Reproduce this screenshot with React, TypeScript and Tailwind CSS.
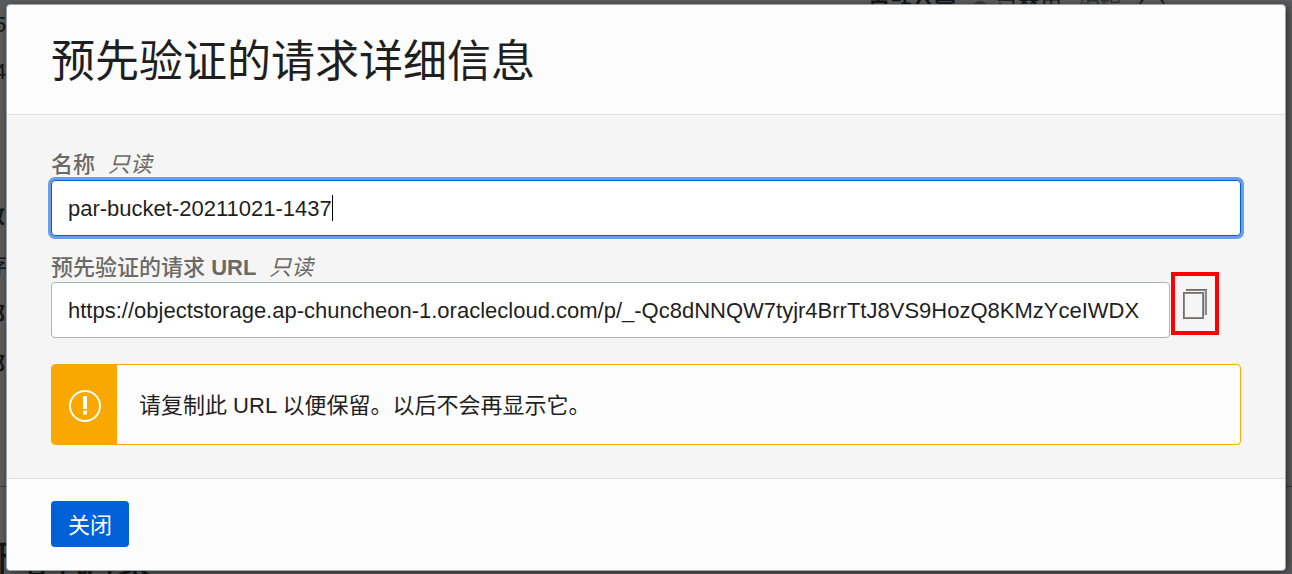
function CopyIcon() {
  return (
    <svg width="26" height="32" viewBox="0 0 26 32" fill="none" aria-hidden="true">
      <path d="M4 1H25V27H23V3H4Z" fill="#8b8a89" />
      <path d="M22 3H23V27H22Z" fill="#d0d0d0" />
      <path d="M4 1H25V2H4Z" fill="#6b6967" />
      <rect x="2" y="5" width="19" height="25" stroke="#8b8a89" strokeWidth="2" />
      <rect x="1.500" y="4.500" width="20" height="26" stroke="#716f6d" />
    </svg>
  );
}

function WarningIcon() {
  return (
    <svg width="34" height="34" viewBox="0 0 34 34" fill="none" aria-hidden="true">
      <circle cx="17" cy="17" r="15" stroke="#fff" strokeWidth="2" />
      <path d="M15 7h4v13h-4zM15 21.500h4v4h-4z" fill="#fff" />
    </svg>
  );
}

function PageBehind() {
  return (
    <div aria-hidden="true" className="absolute inset-0 overflow-hidden bg-[#5c5c5c] text-[22px] leading-[30px] text-[#161616]">
      <div className="absolute -top-[6px] left-[868px] flex items-center gap-4">
        <span className="font-bold">自动公寓</span>
        <span className="size-4 rounded-full bg-[#3c3c3c]" />
        <span className="-ml-2">已禁用</span>
        <span className="text-[#333333]">编辑</span>
        <span className="size-7 rounded-full border-2 border-[#222222]" />
      </div>
      <span className="absolute -left-[6px] top-[10px]">5</span>
      <span className="absolute -left-[6px] top-[57px]">4</span>
      <span className="absolute -left-[17px] top-[201px] font-bold">数</span>
      <span className="absolute -left-[15px] top-[251px]">存</span>
      <span className="absolute -left-[17px] top-[300px] font-bold">部</span>
      <span className="absolute -left-[17px] top-[350px] font-bold">部</span>
      <div className="absolute inset-x-0 top-[486px] border-t border-[#3a3a3a]" />
      <span className="absolute -left-[19px] top-[540px] text-[44px] leading-[44px]">下的记录</span>
    </div>
  );
}

export default function App() {
  return (
    <div className="relative min-h-screen overflow-hidden px-[6px] pt-1 pb-[2px] font-['Liberation_Sans','Noto_Sans_CJK_SC',sans-serif] text-[22px] text-[#1f1f1f]">
      <PageBehind />
      <div
        role="dialog"
        aria-modal="true"
        aria-labelledby="dialog-title"
        className="relative rounded-sm border border-[#9ba3ad] bg-[#fcfcfc] shadow-[2px_2px_8px_rgba(0,0,0,0.5)]"
      >
        <header className="border-b border-[#e0e0e0] px-11 pt-[25px] pb-5">
          <h1 id="dialog-title" className="text-[44px] leading-[64px]">预先验证的请求详细信息</h1>
        </header>

        <main className="bg-[#f5f5f5] px-11 pt-[35px] pb-[33px]">
          <div className="flex flex-col">
            <label htmlFor="par-name" className="leading-[30px] font-medium text-[#6b6966]">
              名称<em className="ml-[13px] font-normal">只读</em>
            </label>
            <div className="relative">
              <input
                id="par-name"
                type="text"
                readOnly
                defaultValue="par-bucket-20211021-1437"
                className="block h-14 w-full rounded border border-[#0060d8] bg-white px-4 pt-0.5 caret-transparent ring-3 ring-[#6b9de8] outline-none"
              />
              <span aria-hidden="true" className="absolute top-[15px] left-[281px] h-[26px] w-px bg-black" />
            </div>
          </div>

          <div className="mt-[17px] flex flex-col">
            <label htmlFor="par-url" className="leading-[30px] font-medium text-[#6b6966]">
              预先验证的请求 <span className="font-bold">URL</span>
              <em className="ml-[13px] font-normal">只读</em>
            </label>
            <div className="-mt-px flex items-start">
              <input
                id="par-url"
                type="text"
                readOnly
                defaultValue="https://objectstorage.ap-chuncheon-1.oraclecloud.com/p/_-Qc8dNNQW7tyjr4BrrTtJ8VS9HozQ8KMzYceIWDX"
                className="h-14 min-w-0 flex-1 rounded border border-[#aeb3bf] bg-white px-4 pt-0.5 outline-none"
              />
              <button
                type="button"
                aria-label="复制"
                className="-mt-[10px] mr-[22px] ml-px flex h-[63px] w-12 items-center justify-center border-4 border-[#ff0000]"
              >
                <CopyIcon />
              </button>
            </div>
          </div>

          <div role="alert" className="mt-[26px] flex min-h-[81px] overflow-hidden rounded border border-[#f9a800] bg-[#fcfcfc]">
            <div className="flex w-[65px] shrink-0 items-center justify-center bg-[#f9a800] pt-0.5">
              <WarningIcon />
            </div>
            <p className="self-center px-[22px] pt-0.5 leading-[30px]">请复制此 URL 以便保留。以后不会再显示它。</p>
          </div>
        </main>

        <footer className="border-t border-[#e0e0e0] px-11 pt-[22px] pb-[23px]">
          <button type="button" className="h-[46px] rounded bg-[#0060d8] px-[17px] pt-0.5 text-white">
            关闭
          </button>
        </footer>
      </div>
    </div>
  );
}
